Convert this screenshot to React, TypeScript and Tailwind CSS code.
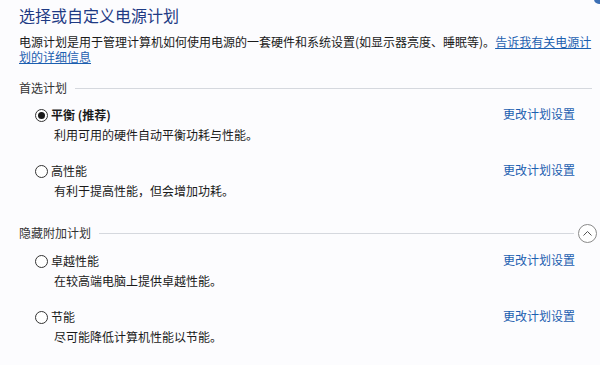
const FONT = '"Microsoft YaHei", "Noto Sans CJK SC", "Noto Sans", sans-serif';

interface Plan {
    name: string;
    desc: string;
    checked?: boolean;
    bold?: boolean;
}

const preferred: Plan[] = [
    { name: '平衡 (推荐)', desc: '利用可用的硬件自动平衡功耗与性能。', checked: true, bold: true },
    { name: '高性能', desc: '有利于提高性能，但会增加功耗。' },
];

const hidden: Plan[] = [
    { name: '卓越性能', desc: '在较高端电脑上提供卓越性能。' },
    { name: '节能', desc: '尽可能降低计算机性能以节能。' },
];

const Radio = ({ checked }: { checked?: boolean }) => (
    <div className="w-[13px] h-[13px] rounded-full border border-[#333] flex items-center justify-center bg-white shrink-0">
        {checked && <div className="w-[7px] h-[7px] rounded-full bg-[#1a1a1a]"></div>}
    </div>
);

const PlanRow = ({ plan }: { plan: Plan }) => (
    <div className="pl-[16px] pr-[22px]">
        <div className="flex items-center h-[18px]">
            <Radio checked={plan.checked} />
            <span className={`ml-[3px] text-[12px] text-[#1a1a1a] ${plan.bold ? 'font-bold' : ''}`}>{plan.name}</span>
            <span className="ml-auto text-[12px] text-[#1c5fb0] -mt-[2px]">更改计划设置</span>
        </div>
        <div className="mt-[2px] h-[18px] leading-[18px] pl-[19px] text-[12px] text-[#1a1a1a]">{plan.desc}</div>
    </div>
);

const SectionHeader = ({ title, collapse }: { title: string; collapse?: boolean }) => (
    <div className="flex items-center h-[16px]">
        <span className="text-[12px] text-[#333] leading-[16px]">{title}</span>
        <div className={`flex-1 h-px bg-[#d5d8de] ml-[8px] ${collapse ? 'mr-[4px]' : 'mr-[5px]'}`}></div>
        {collapse && (
            <div className="w-[19px] h-[19px] rounded-full border border-[#8a8a8a] flex items-center justify-center bg-white">
                <svg width="11" height="11" viewBox="0 0 11 11" fill="none">
                    <path d="M1.5 7.5 L5.5 3.5 L9.5 7.5" stroke="#555" strokeWidth="1" />
                </svg>
            </div>
        )}
    </div>
);

export default function App() {
    return (
        <div
            className="relative w-[600px] h-[365px] overflow-hidden bg-[#fcfcfe] pl-[19px] pr-[3px] pt-[4px]"
            style={{ fontFamily: FONT }}
        >
            <div className="absolute -top-[6px] -right-[4px] w-[10px] h-[10px] rounded-full bg-[#3c6fb4]"></div>
            <h1 className="h-[22px] leading-[22px] text-[16px] text-[#1e3a84] font-normal">选择或自定义电源计划</h1>
            <p className="mt-[8px] text-[12px] leading-[15px] text-[#1a1a1a] pr-[4px]">
                电源计划是用于管理计算机如何使用电源的一套硬件和系统设置(如显示器亮度、睡眠等)。
                <span className="text-[#1c5fb0] underline">告诉我有关电源计划的详细信息</span>
            </p>
            <div className="mt-[16px]">
                <SectionHeader title="首选计划" />
            </div>
            <div className="mt-[10px] flex flex-col gap-[18px]">
                {preferred.map((p) => (
                    <PlanRow key={p.name} plan={p} />
                ))}
            </div>
            <div className="mt-[25px]">
                <SectionHeader title="隐藏附加计划" collapse />
            </div>
            <div className="mt-[11px] flex flex-col gap-[18px]">
                {hidden.map((p) => (
                    <PlanRow key={p.name} plan={p} />
                ))}
            </div>
        </div>
    );
}
